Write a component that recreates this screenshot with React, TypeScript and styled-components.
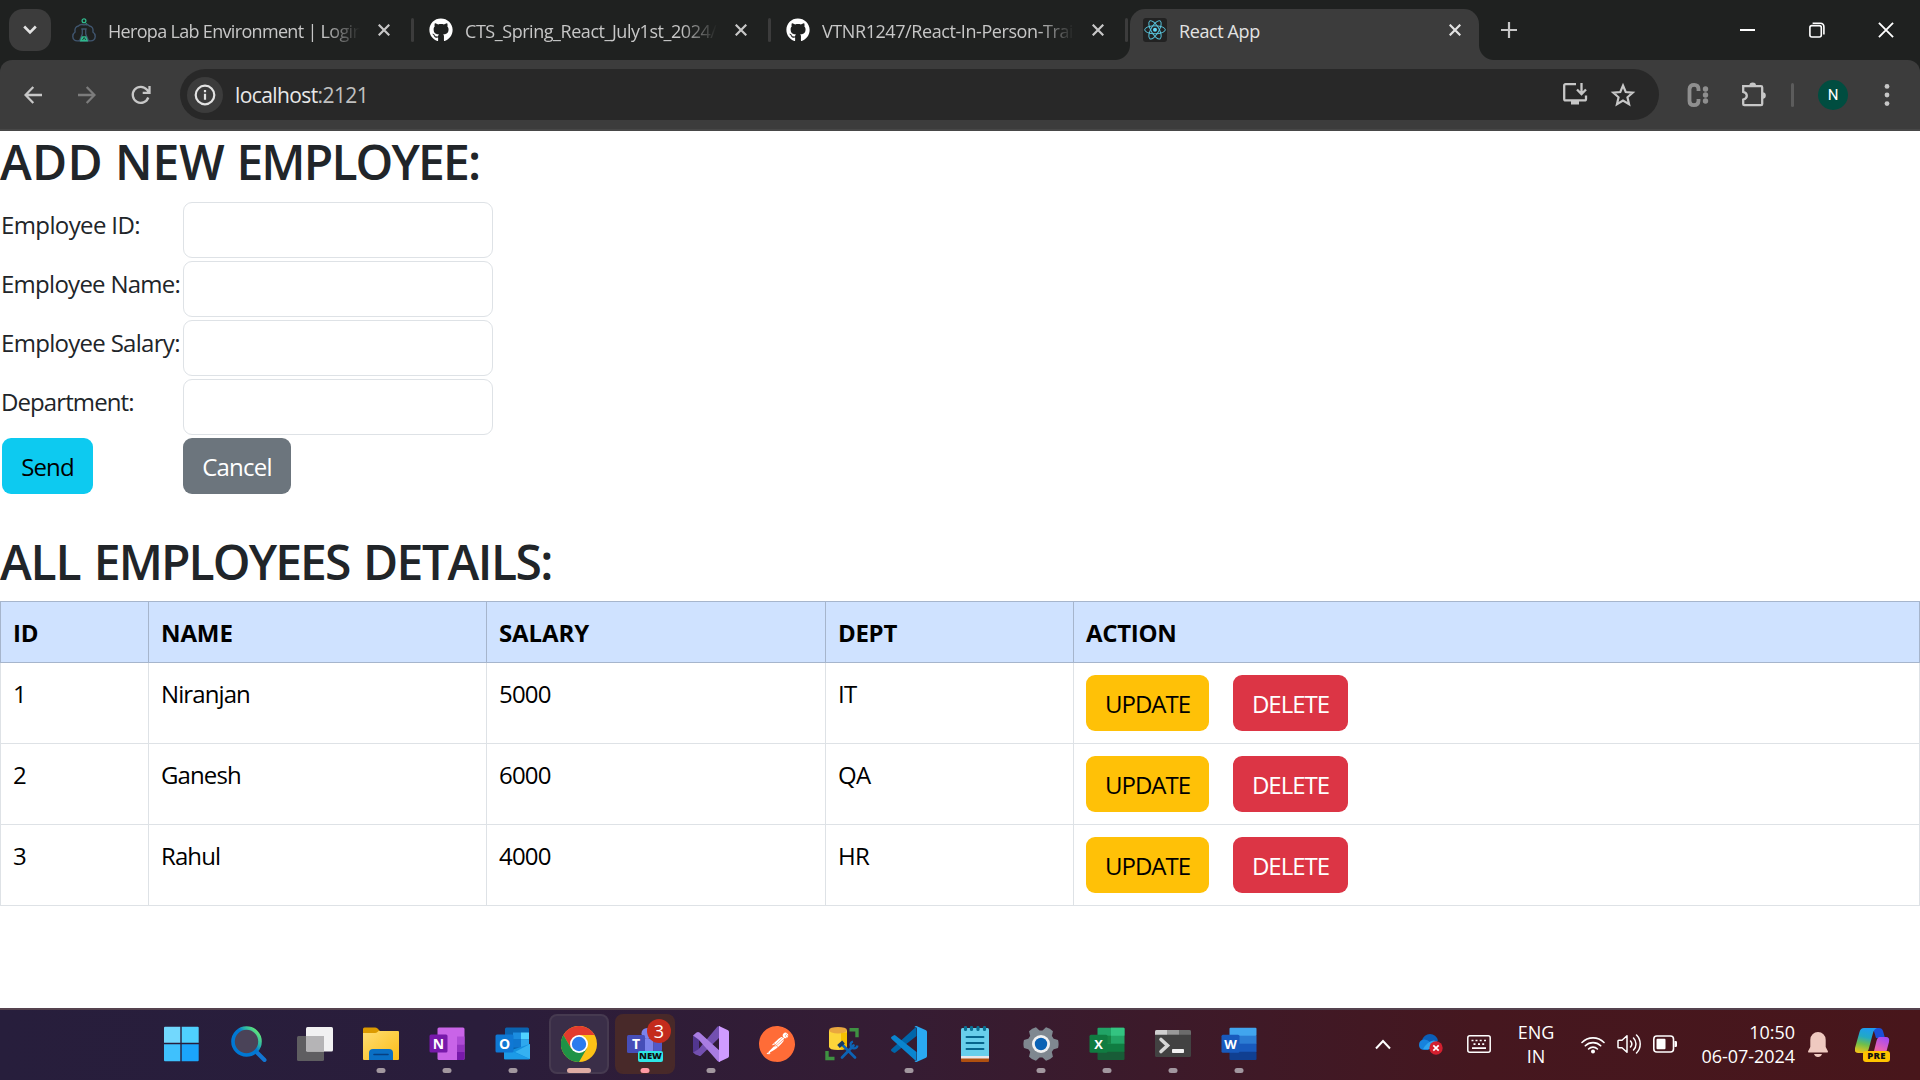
import React from "react";
import styled, { createGlobalStyle } from "styled-components";
import { FaGithub } from "react-icons/fa";
import { SiPostman } from "react-icons/si";

const GlobalStyle = createGlobalStyle`
  *, *::before, *::after { box-sizing: border-box; }
  body {
    margin: 0;
    background: #fff;
    font-family: "Open Sans", "Noto Sans", sans-serif;
    overflow: hidden;
  }
  svg { display: block; flex: none; }
`;

const Screen = styled.div`
  display: flex;
  flex-direction: column;
  width: 1920px;
  height: 1080px;
`;

/* ---------- browser frame ---------- */

const TabStrip = styled.header`
  display: flex;
  height: 60px;
  background: #1f2120;
  color: #c7c7c7;
`;

const TabSearch = styled.button`
  display: grid;
  place-items: center;
  width: 42px;
  height: 42px;
  margin: 9px 8px 0 9px;
  padding: 0;
  border: 0;
  border-radius: 14px;
  background: #3c3c3c;
  color: #e3e3e3;
`;

const Tab = styled.div<{ $active?: boolean }>`
  position: relative;
  display: flex;
  align-items: center;
  width: ${(p) => (p.$active ? 349 : 357)}px;
  height: 51px;
  margin-top: 9px;
  padding: 0 ${(p) => (p.$active ? 18 : 2)}px 9px 13px;
  border-radius: 15px 15px 0 0;
  background: ${(p) => (p.$active ? "#3c3c3c" : "transparent")};
  color: ${(p) => (p.$active ? "#e3e3e3" : "#c7c7c7")};
`;

const Flare = styled.span<{ $side: "left" | "right" }>`
  position: absolute;
  bottom: 0;
  ${(p) => p.$side}: -15px;
  width: 15px;
  height: 15px;
  background: radial-gradient(
    circle at ${(p) => (p.$side === "left" ? "0 0" : "100% 0")},
    transparent 14.5px,
    #3c3c3c 15.5px
  );
`;

const TabTitle = styled.span<{ $track: number; $fade?: boolean }>`
  flex: 1;
  min-width: 0;
  margin: 2px 18px 0 12px;
  overflow: hidden;
  white-space: nowrap;
  font-size: 18px;
  line-height: 26px;
  letter-spacing: ${(p) => p.$track}px;
  ${(p) =>
    p.$fade &&
    "mask-image: linear-gradient(90deg, #000 calc(100% - 36px), transparent);"}
`;

const TabDivider = styled.span`
  width: 3px;
  height: 24px;
  margin-left: 21px;
  border-radius: 2px;
  background: #3c3c3c;
`;

const NewTab = styled.button`
  display: grid;
  place-items: center;
  width: 30px;
  height: 30px;
  margin: 15px 0 0 15px;
  padding: 0;
  border: 0;
  background: none;
  color: #c7c7c7;
`;

const WindowControls = styled.div`
  display: flex;
  margin-left: auto;
  color: #fff;
`;

const WindowControl = styled.span`
  display: grid;
  place-items: center;
  width: 69px;
  height: 60px;
`;

const Toolbar = styled.div`
  background: #1f2120;
`;

const ToolbarInner = styled.div`
  display: flex;
  align-items: center;
  height: 71px;
  padding: 0 18px;
  border-radius: 12px 12px 0 0;
  border-bottom: 2px solid #474747;
  background: #3c3c3c;
  color: #c7c7c7;
`;

const NavButton = styled.span<{ $dim?: boolean }>`
  display: grid;
  place-items: center;
  width: 30px;
  height: 30px;
  margin-right: 24px;
  color: ${(p) => (p.$dim ? "#7c7c7c" : "#c7c7c7")};
`;

const Omnibox = styled.div`
  display: flex;
  align-items: center;
  width: 1479px;
  height: 51px;
  padding: 0 23px 0 7px;
  border-radius: 26px;
  background: #282828;
`;

const SiteInfo = styled.span`
  display: grid;
  place-items: center;
  width: 36px;
  height: 36px;
  margin-right: 12px;
  border-radius: 50%;
  background: #3c3c3c;
  color: #e3e3e3;
`;

const Address = styled.span`
  flex: 1;
  font-size: 21px;
  line-height: 30px;
  letter-spacing: -0.6px;
  color: #c0c0c0;
`;

const Host = styled.span`
  color: #e8e8e8;
`;

const OmniActions = styled.span`
  display: flex;
  gap: 22px;
`;

const Extensions = styled.div`
  display: flex;
  align-items: center;
  margin-left: auto;
`;

const ToolbarRule = styled.span`
  width: 3px;
  height: 24px;
  margin: 0 24px 0 24px;
  border-radius: 2px;
  background: #5c5c5c;
`;

const Avatar = styled.span`
  display: grid;
  place-items: center;
  width: 30px;
  height: 30px;
  margin-right: 36px;
  border-radius: 50%;
  background: #004d40;
  color: #fff;
  font: 15px/30px Roboto, sans-serif;
`;

/* ---------- page ---------- */

const Page = styled.main`
  flex: 1;
  background: #fff;
  color: #212529;
  font-size: 24px;
  line-height: 36px;
`;

const Heading = styled.h2<{ $gap: number }>`
  margin: 0;
  padding: 2px 0 10px;
  font-size: 48px;
  font-weight: 600;
  line-height: 58px;
  word-spacing: ${(p) => p.$gap}px;
`;

const Word = styled.span<{ $track: number }>`
  letter-spacing: ${(p) => p.$track}px;
`;

const EmployeeForm = styled.form`
  display: grid;
  grid-template-columns: 178px 310px;
  gap: 3px;
  margin: 1px 0 37px 2px;
`;

const Label = styled.label<{ $track: number }>`
  height: 56px;
  margin-left: -1px;
  padding-top: 5px;
  white-space: nowrap;
  letter-spacing: ${(p) => p.$track}px;
`;

const Field = styled.input`
  width: 310px;
  height: 56px;
  padding: 9px 18px;
  border: 1px solid #dee2e6;
  border-radius: 9px;
  background: #fff;
  font: inherit;
  outline: 0;
`;

const tones = {
  info: ["#0dcaf0", "#000"],
  secondary: ["#6c757d", "#fff"],
  warning: ["#ffc107", "#000"],
  danger: ["#dc3545", "#fff"],
} as const;

const Button = styled.button<{ $tone: keyof typeof tones; $width: number; $track: number }>`
  justify-self: start;
  width: ${(p) => p.$width}px;
  height: 56px;
  padding: 1px 0 0;
  border: 0;
  border-radius: 9px;
  background: ${(p) => tones[p.$tone][0]};
  color: ${(p) => tones[p.$tone][1]};
  font: inherit;
  letter-spacing: ${(p) => p.$track}px;
`;

const Table = styled.table`
  width: 1920px;
  table-layout: fixed;
  border-collapse: collapse;
  text-align: left;
  color: #000;
`;

const Col = styled.col<{ $width: number }>`
  width: ${(p) => p.$width}px;
`;

const Th = styled.th<{ $track: number }>`
  height: 61px;
  padding: 12px 12px 11px;
  border: 1px solid #a6b5cc;
  background: #cfe2ff;
  font-weight: 700;
  letter-spacing: ${(p) => p.$track}px;
`;

const Td = styled.td<{ $track?: number }>`
  height: 81px;
  padding: 13px 12px 12px;
  border: 1px solid #dee2e6;
  vertical-align: top;
  letter-spacing: ${(p) => p.$track ?? 0}px;
`;

const ActionTd = styled(Td)`
  padding: 12px;
`;

const Actions = styled.div`
  display: flex;
  gap: 24px;
`;

/* ---------- taskbar ---------- */

const Taskbar = styled.footer`
  display: flex;
  height: 72px;
  padding: 0 29px 0 150px;
  border-top: 2px solid #55434f;
  background: linear-gradient(90deg, #271e3c 0, #2a1d3b 480px, #351c33 900px, #3c1a2a 1150px, #45171f 1480px, #48161b 1920px);
  color: #fff;
`;

const Slot = styled.div<{ $state?: "active" | "alert" }>`
  position: relative;
  display: grid;
  place-items: center;
  width: 60px;
  height: 60px;
  margin: 4px 3px 0;
  border-radius: 8px;
  border: 2px solid ${(p) =>
    p.$state === "active" ? "#463a50" : p.$state === "alert" ? "#482929" : "transparent"};
  background: ${(p) =>
    p.$state === "active" ? "#3a2e48" : p.$state === "alert" ? "#482929" : "transparent"};
`;

const Running = styled.span<{ $width?: number; $color?: string }>`
  position: absolute;
  bottom: -1px;
  left: 50%;
  width: ${(p) => p.$width ?? 9}px;
  height: 5px;
  transform: translateX(-50%);
  border-radius: 3px;
  background: ${(p) => p.$color ?? "#a2979f"};
`;

const Badge = styled.span`
  position: absolute;
  top: 3px;
  right: 2px;
  width: 24px;
  height: 24px;
  border-radius: 50%;
  background: #c42b1c;
  font-size: 18px;
  line-height: 24px;
  text-align: center;
`;

const NewTag = styled.span`
  position: absolute;
  left: 21px;
  top: 35px;
  width: 25px;
  height: 11px;
  border-radius: 2px;
  background: #2ee6e6;
  color: #111;
  font-size: 9.5px;
  font-weight: 800;
  line-height: 10px;
  text-align: center;
`;

const Tray = styled.div`
  display: flex;
  align-items: center;
  margin-left: auto;
  padding-bottom: 2px;
`;

const TrayItem = styled.span<{ $width: number }>`
  display: grid;
  place-items: center;
  width: ${(p) => p.$width}px;
`;

const TrayText = styled.span<{ $align: "center" | "right"; $width: number }>`
  width: ${(p) => p.$width}px;
  font-size: 18px;
  line-height: 24px;
  letter-spacing: -0.05px;
  text-align: ${(p) => p.$align};
  white-space: pre-line;
`;

const Copilot = styled.span`
  position: relative;
  width: 36px;
  height: 36px;
  margin-left: 14px;
`;

const PreTag = styled.span`
  position: absolute;
  left: 8px;
  top: 25px;
  width: 27px;
  height: 11px;
  border-radius: 3px;
  background: #ffc400;
  color: #111;
  font-size: 9.5px;
  font-weight: 800;
  line-height: 10px;
  text-align: center;
  letter-spacing: 0.3px;
`;

/* ---------- icons ---------- */

const Close = ({ size = 12, w = 2.2 }: { size?: number; w?: number }) => (
  <svg width={size} height={size} viewBox="0 0 12 12" fill="none" stroke="currentColor" strokeWidth={w}>
    <path d="M.7.7l10.6 10.6M11.3.7L.7 11.3" />
  </svg>
);

const Heropa = () => (
  <svg width="24" height="24" viewBox="0 0 24 24" fill="none">
    <circle cx="12" cy="2.8" r="1.9" stroke="#2fb98c" strokeWidth="1.3" />
    <circle cx="14.4" cy="6.3" r="1" fill="#2fb98c" />
    <path d="M7 22.600C3 23.600.7 21.400.8 18.300c.1-2 .9-3.400 2.300-4.300-.6-3.600.9-5.700 3.300-6 1.200-1.300 3.300-1.900 5.600-1.200 2.300-.7 4.400-.1 5.600 1.200 2.400.3 3.900 2.400 3.300 6 1.400.9 2.200 2.300 2.300 4.300.1 3.100-2.200 5.300-6.200 4.300" stroke="#40566f" strokeWidth="1.400" />
    <path d="M9.300 11h5.400M10.300 11v5L7.500 22.900h9L13.700 16v-5" stroke="#40566f" strokeWidth="1.300" />
    <path d="M9.800 18.200h4.400l2 5.300H7.800z" fill="#2fb98c" />
    <path d="M10.500 22l1.700-2.500 1.500 2.500" stroke="#1f2120" strokeWidth=".8" />
  </svg>
);

const ReactLogo = () => (
  <svg width="24" height="24" viewBox="0 0 24 24" fill="none" stroke="#58c4dc" strokeWidth="1">
    <rect width="24" height="24" rx="3" fill="#222" stroke="none" />
    <g transform="translate(12 11.8)">
      <ellipse rx="10.300" ry="4" />
      <ellipse rx="10.300" ry="4" transform="rotate(60)" />
      <ellipse rx="10.300" ry="4" transform="rotate(120)" />
      <circle r="2" fill="#61dafb" stroke="none" />
    </g>
  </svg>
);

const InstallIcon = () => (
  <svg width="26" height="24" viewBox="0 0 26 24" fill="none" stroke="currentColor" strokeWidth="2.3">
    <path d="M14 2.200H3.600q-1.400 0-1.400 1.400V17q0 1.400 1.400 1.400h19q1.400 0 1.400-1.400v-3.500M19.500 1v10.500M15 7.500l4.500 4.500L24 7.500" />
    <path d="M9 18h8v4.500H9z" fill="currentColor" stroke="none" />
  </svg>
);

const StarIcon = () => (
  <svg width="26" height="26" viewBox="0 0 24 24" fill="none" stroke="currentColor" strokeWidth="2">
    <path d="M12 3.200l2.500 6 6.500.6-4.900 4.300 1.500 6.400L12 17.100l-5.600 3.400 1.500-6.400L3 9.800l6.500-.6z" />
  </svg>
);

const ColonIcon = () => (
  <svg width="23" height="26" viewBox="0 0 23 26" fill="none">
    <path d="M11.500 9V7Q11.500 2.800 7.200 2.800T2.500 7v12q0 4.200 4.400 4.200t4.600-4.200v-2" stroke="#8f8f8f" strokeWidth="3.800" />
    <circle cx="18.500" cy="7" r="2.700" fill="#8f8f8f" />
    <circle cx="18.500" cy="13" r="2.700" fill="#8f8f8f" />
    <circle cx="18.500" cy="19" r="2.700" fill="#8f8f8f" />
  </svg>
);

const PuzzleIcon = () => (
  <svg width="27" height="27" viewBox="0 0 27 27" fill="none" stroke="currentColor" strokeWidth="2.300">
    <path d="M3.200 5.200H21q1.200 0 1.200 1.200V23q0 1.200-1.200 1.200H4.400q-1.200 0-1.200-1.200v-4.500q3.600-1 3.600-3.800t-3.600-3.800z" />
    <path d="M9.300 5a3.400 3.400 0 016.800 0zM22.500 11.300a3.300 3.300 0 010 6.600z" fill="currentColor" stroke="none" />
  </svg>
);

const StartIcon = () => (
  <svg width="36" height="36" viewBox="1.500 0 36 36" overflow="visible">
    <path d="M1.500.8h15.300v16H.5V1.800q0-1 1-1z" fill="#72d8fd" />
    <path d="M18.200.8h16q1 0 1 1v15h-17z" fill="#4fd0fe" />
    <path d="M.5 18.200h16.300v17H1.500q-1 0-1-1z" fill="#3fc1fd" />
    <path d="M18.200 18.200h17v16q0 1-1 1h-16z" fill="#1ba5fb" />
  </svg>
);

const SearchIcon = () => (
  <svg width="36" height="36" viewBox="0 0 36 36" fill="none">
    <defs>
      <linearGradient id="ring" x1="1" y1="0" x2=".2" y2=".7">
        <stop offset="0.150" stopColor="#5fe37c" />
        <stop offset=".4" stopColor="#2bb5a8" />
        <stop offset=".6" stopColor="#0078d4" />
      </linearGradient>
    </defs>
    <path d="M26 26.500l7.500 7.500" stroke="#1276d3" strokeWidth="4" strokeLinecap="round" />
    <circle cx="15.500" cy="15.500" r="13.500" fill="#4a4358" stroke="url(#ring)" strokeWidth="3.600" />
  </svg>
);

const TaskViewIcon = () => (
  <svg width="36" height="36" viewBox="0 0 36 36">
    <rect x="0" y="10" width="27" height="25" rx="1.500" fill="#5f5e61" />
    <rect x="9" y="1" width="27" height="24.500" rx="1.500" fill="#f1f1f2" />
    <path d="M9 10h18v15.500H10.500q-1.500 0-1.500-1.500z" fill="#b5b4b6" />
  </svg>
);

const ExplorerIcon = () => (
  <svg width="36" height="36" viewBox="0 0 36 36">
    <defs>
      <linearGradient id="folder" x1="0" y1="0" x2="1" y2="1">
        <stop offset="0" stopColor="#ffdd72" />
        <stop offset="1" stopColor="#fbbd18" />
      </linearGradient>
    </defs>
    <path d="M0 3q0-1.500 1.500-1.500H12q1.500 0 2.500 1l2 2V10H0z" fill="#dc9a00" />
    <path d="M0 7h12q1.500 0 2.500-1l1-1H35q1 0 1 1v27q0 1-1 1H1q-1 0-1-1z" fill="url(#folder)" />
    <path d="M6 34v-7q0-4 4-4h16q4 0 4 4v7z" fill="#0a6fc4" />
    <path d="M11 28.500h14" stroke="#073f80" strokeWidth="1.600" strokeLinecap="round" />
  </svg>
);

const tile = { fontFamily: "Open Sans, sans-serif", fontWeight: 700, fill: "#fff", textAnchor: "middle" as const };

const OneNoteIcon = () => (
  <svg width="36" height="36" viewBox="0 0 36 36">
    <rect x="8.500" y="1.500" width="27" height="32.500" rx="1.500" fill="#c964e8" />
    <path d="M28 10.500h7.500v8H28z" fill="#ae4bd5" />
    <path d="M28 18.500h7.500v8H28z" fill="#9332bf" />
    <path d="M28 26h7.500v6.500q0 1.500-1.500 1.500h-6z" fill="#7719aa" />
    <rect x=".5" y="8.500" width="18" height="18" rx="1.500" fill="#7719aa" />
    <text x="9.500" y="22.500" fontSize="14" {...tile}>N</text>
  </svg>
);

const OutlookIcon = () => (
  <svg width="36" height="36" viewBox="0 0 36 36">
    <rect x="10" y="1.500" width="24" height="25" rx="1.500" fill="#0a63b0" />
    <path d="M18 6.500h8v7h-8z" fill="#1b8de0" />
    <path d="M26 6.500h8v7h-8z" fill="#50d2ff" />
    <path d="M18 13.500h8v8h-8z" fill="#0f76cf" />
    <path d="M26 13.500h8v7l-8 4z" fill="#2ea8ee" />
    <path d="M9 20l9 3.500L35 18v14q0 1.500-1.500 1.500h-23Q9 33.500 9 32z" fill="#1490df" />
    <path d="M35 18L20 26l15 7z" fill="#35b1f1" />
    <path d="M9 22l26 11H10.500Q9 33.500 9 32z" fill="#1c9be8" />
    <rect x=".5" y="8.500" width="18" height="18" rx="1.500" fill="#0f78d4" />
    <text x="9.500" y="22.500" fontSize="14" {...tile}>O</text>
  </svg>
);

const ChromeIcon = () => (
  <svg width="36" height="36" viewBox="0 0 36 36">
    <circle cx="18" cy="18" r="18" fill="#fbc116" />
    <path d="M18 9h15.600A18 18 0 002.400 9l7.800 13.500z" fill="#e33b2e" />
    <path d="M2.400 9A18 18 0 0018 36l7.800-13.500H10.200z" fill="#1f9246" />
    <circle cx="18" cy="18" r="9" fill="#fff" />
    <circle cx="18" cy="18" r="7.200" fill="#2a7bee" />
  </svg>
);

const TeamsIcon = () => (
  <svg width="36" height="36" viewBox="0 0 36 36">
    <circle cx="20" cy="7.500" r="5.500" fill="#7b83eb" />
    <path d="M11 13h15.500v13a8 8 0 01-15.500 2z" fill="#7b83eb" />
    <path d="M26.500 14H35v10a6 6 0 01-8.500 4z" fill="#5059c9" />
    <rect x="0" y="9" width="18" height="18" rx="1.500" fill="#464eb8" />
    <text x="9" y="23" fontSize="14" {...tile}>T</text>
  </svg>
);

const VisualStudioIcon = () => (
  <svg width="36" height="36" viewBox="0 0 36 36">
    <path d="M0 9.500l6-1v19l-6-1z" fill="#52368f" />
    <path d="M5.500 29.500L2.500 28.500 0 26.500l5.500-3.300L24.500.5 27 0v11L8 29.500q-1.200 1-2.500 0z" fill="#7350b0" />
    <path d="M0 9.500L3.500 6.500q1.500-1 3 0L27 25v11q-1.500 0-2.500-1L5.500 13.500z" fill="#a97de2" />
    <path d="M26 0l9 4.300q1 .5 1 1.700v24q0 1.200-1 1.700L26 36z" fill="#cf9bff" />
  </svg>
);

const PostmanMark = styled.span`
  display: grid;
  place-items: center;
  width: 36px;
  height: 36px;
  border-radius: 50%;
  background: radial-gradient(circle, #fff 16px, transparent 16.5px);
  color: #ff6c37;
`;

const SqlIcon = () => (
  <svg width="36" height="36" viewBox="0 0 36 36" fill="none">
    <path d="M24.500 3.700h7.500v7.500M2 25v7.500h7.500" stroke="#3f9142" strokeWidth="3.400" />
    <path d="M4 4v16.500q0 3.500 9 3.500t9-3.500V4z" fill="#fcd53a" />
    <path d="M16 6.500h6v14q-1 2.500-6 3.400z" fill="#f5bf00" />
    <ellipse cx="13" cy="4.200" rx="9" ry="3.300" fill="#e9a73f" />
    <path d="M17 18.500l13 13M28.500 19.500L17 31.500" stroke="#0d63b5" strokeWidth="2.700" strokeLinecap="round" />
    <path d="M13.500 20.500l5-4.500" stroke="#173a63" strokeWidth="4" />
    <path d="M28 15.500a3.500 3.500 0 104.500 4" stroke="#0d63b5" strokeWidth="2.200" />
  </svg>
);

const CodeIcon = () => (
  <svg width="36" height="36" viewBox="0 0 36 36">
    <path d="M.6 25.300a1.500 1.500 0 010-2.200L25.500.5V10L4.500 26.500q-1 .8-2 0z" fill="#0065a9" />
    <path d="M.6 10.700a1.500 1.500 0 000 2.200L25.500 35.500V26L4.500 9.500q-1-.8-2 0z" fill="#0a85cf" />
    <path d="M25.500 0L35 4.300q1 .5 1 1.600v24.200q0 1.100-1 1.600L25.500 36q-1.500 0-2.200-1.200 2.700 1 2.700-1.200V2.400q0-2.200-2.700-1.200Q24 0 25.500 0z" fill="#2aa9f2" />
  </svg>
);

const NotepadIcon = () => (
  <svg width="36" height="36" viewBox="0 0 36 36">
    <path d="M4 32h28v3q0 1-1 1H5q-1 0-1-1z" fill="#b0500f" />
    <path d="M4 28h28v4.500H4z" fill="#e9e6e8" />
    <path d="M4 3.500Q4 2 5.500 2h25Q32 2 32 3.500V30H4z" fill="#68cfeb" />
    <path d="M9.500 11h17M9.500 17h17M9.500 23h17" stroke="#06658c" strokeWidth="1.900" strokeLinecap="round" />
    <path d="M8.500 1.500v2M14.500 1.500v2M21 1.500v2M27.500 1.500v2" stroke="#0a6f91" strokeWidth="3.200" strokeLinecap="round" />
  </svg>
);

const SettingsIcon = () => (
  <svg width="36" height="36" viewBox="0 0 36 36">
    <g fill="#7f8890" transform="translate(18 18)">
      <circle r="13.500" />
      {[0, 60, 120, 180, 240, 300].map((a) => (
        <path key={a} transform={`rotate(${a + 30})`} d="M-5.500-12l1.500-5q4-1.200 8 0l1.500 5z" />
      ))}
    </g>
    <circle cx="18" cy="18" r="9" fill="#f1f1f1" />
    <circle cx="18" cy="18" r="6.200" fill="#0b62b4" />
  </svg>
);

type OfficeProps = { letter: string; bands: string[]; tab: string; right: string };
const OfficeIcon = ({ letter, bands, tab, right }: OfficeProps) => (
  <svg width="36" height="36" viewBox="0 0 36 36">
    {bands.map((c, i) => (
      <rect key={c} x="8.500" y={1.700 + i * 8} width="27" height="8.300" rx={i === 0 || i === 3 ? 1 : 0} fill={c} />
    ))}
    {right && <path d="M22 1.700h12.500q1 0 1 1V9.700H22z" fill={right} />}
    {letter === "X" && <path d="M8.500 9.700H22v8H8.500z" fill="#178545" />}
    <rect x=".5" y="8.700" width="18" height="18" rx="1.500" fill={tab} />
    <text x="9.500" y="22.500" fontSize="13" {...tile}>{letter}</text>
  </svg>
);

const TerminalIcon = () => (
  <svg width="36" height="36" viewBox="0 0 36 36">
    <rect x="0" y="4" width="36" height="27" rx="1.500" fill="#424242" />
    <path d="M0 8.700V5.500Q0 4 1.500 4H12v4.700z" fill="#cfcfcf" />
    <path d="M12 4h12v4.700H12z" fill="#999" />
    <path d="M24 4h10.500Q36 4 36 5.500v3.200H24z" fill="#6b6b6b" />
    <path d="M6 13.500l6.500 6L6 25.500" fill="none" stroke="#d6d6d6" strokeWidth="3.600" strokeLinecap="round" />
    <rect x="17" y="23" width="12" height="4" rx=".8" fill="#f2f2f2" />
  </svg>
);

const CloudIcon = () => (
  <svg width="26" height="22" viewBox="0 0 26 22">
    <path d="M4 7.500Q6 1 12 1t8 6.500L10 15z" fill="#0b5fb8" />
    <path d="M1 12q0-5 5-5.500 3-.3 6 2.500l4 4-6 4H6q-5-.5-5-5z" fill="#1682dd" />
    <path d="M10 10q6-5 11 0v6H5l2-3z" fill="#2ea3ee" />
    <circle cx="18" cy="15" r="6.700" fill="#d3202f" />
    <path d="M15.300 12.300l5.400 5.400M20.700 12.300l-5.400 5.400" stroke="#fff" strokeWidth="1.700" />
  </svg>
);

const KeyboardIcon = () => (
  <svg width="24" height="18" viewBox="0 0 24 18" fill="none" stroke="#fff" strokeWidth="1.500">
    <rect x=".8" y=".8" width="22.400" height="16.400" rx="2" />
    <path d="M4.500 5.500h2M8.500 5.500h2M12.700 5.500h2M17 5.500h2M6.500 9.200h2M11 9.200h2M15.200 9.200h2M5 13.200h14" strokeWidth="1.700" />
  </svg>
);

const WifiIcon = () => (
  <svg width="24" height="19" viewBox="0 0 24 19" fill="none" stroke="#fff" strokeWidth="1.600" strokeLinecap="round">
    <path d="M1 7.500a15.500 15.500 0 0122 0M4.300 10.800a10.900 10.900 0 0115.400 0M7.600 14a6.200 6.200 0 018.800 0" />
    <circle cx="12" cy="16.500" r="1.200" fill="#fff" />
  </svg>
);

const VolumeIcon = () => (
  <svg width="24" height="22" viewBox="0 0 24 22" fill="none" stroke="#fff" strokeWidth="1.500" strokeLinecap="round" strokeLinejoin="round">
    <path d="M1 8v6q0 .8.800.8H5l5 4.500V2.700L5 7.200H1.800Q1 7.200 1 8z" />
    <path d="M13.500 8a4.500 4.500 0 010 6M16.500 5a8.500 8.500 0 010 12M19.500 2a12.800 12.800 0 010 18" />
  </svg>
);

const BatteryIcon = () => (
  <svg width="25" height="18" viewBox="0 0 25 18" fill="none">
    <rect x=".8" y="1" width="19.700" height="16" rx="3" stroke="#fff" strokeWidth="1.600" />
    <rect x="3.500" y="3.800" width="9" height="10.400" rx="1" fill="#fff" />
    <path d="M21.500 6h1.300q1.200 0 1.200 1.200v3.600q0 1.200-1.200 1.200h-1.300z" fill="#fff" />
  </svg>
);

const BellIcon = () => (
  <svg width="20" height="25" viewBox="0 0 20 25" fill="#efc9c0">
    <path d="M10 0a7.700 7.700 0 017.700 7.700V15l2.100 4q.5 1.500-1 1.500H1.200q-1.500 0-1-1.500l2.100-4V7.700A7.700 7.700 0 0110 0zM6 22h8q-1 3-4 3t-4-3z" />
  </svg>
);

const CopilotIcon = () => (
  <svg width="36" height="36" viewBox="0 -2 36 36">
    <defs>
      <linearGradient id="cpA" x1=".5" y1="0" x2=".3" y2="1">
        <stop offset="0" stopColor="#1d9bf0" />
        <stop offset=".35" stopColor="#22a9c4" />
        <stop offset=".65" stopColor="#6fbf4b" />
        <stop offset="1" stopColor="#f0c419" />
      </linearGradient>
      <linearGradient id="cpB" x1=".7" y1="0" x2=".3" y2="1">
        <stop offset="0" stopColor="#a64bf4" />
        <stop offset=".5" stopColor="#e560b5" />
        <stop offset="1" stopColor="#ff7a59" />
      </linearGradient>
    </defs>
    <path d="M18 0h6q3 0 4 3l2 7h-9z" fill="#1b4fd8" />
    <path d="M9 0h13q-3 1-4 5l-4 15q-1 5-5 5H3q-4 0-3-5L4.500 4Q5.500 0 9 0z" fill="url(#cpA)" />
    <path d="M25 9h6q4 0 3 5l-3.500 13q-1 5-5 5H14q3-1 4-5l3.500-14q1-4 3.500-4z" fill="url(#cpB)" />
  </svg>
);

/* ---------- data ---------- */

const tabs = [
  { title: "Heropa Lab Environment | Login", track: -0.68, icon: <Heropa /> },
  { title: "CTS_Spring_React_July1st_2024/", track: -0.45, icon: <FaGithub size={24} color="#fff" /> },
  { title: "VTNR1247/React-In-Person-Train", track: -0.42, icon: <FaGithub size={24} color="#fff" /> },
];

const fields = [
  { label: "Employee ID:", track: -0.62 },
  { label: "Employee Name:", track: -0.73 },
  { label: "Employee Salary:", track: -0.7 },
  { label: "Department:", track: -0.9 },
];

const columns = [
  { label: "ID", width: 148, track: -0.2 },
  { label: "NAME", width: 338, track: -0.1 },
  { label: "SALARY", width: 339, track: -0.1 },
  { label: "DEPT", width: 248, track: -0.3 },
  { label: "ACTION", width: 846, track: -0.3 },
];

const employees = [
  { id: 1, name: "Niranjan", salary: 5000, dept: "IT" },
  { id: 2, name: "Ganesh", salary: 6000, dept: "QA" },
  { id: 3, name: "Rahul", salary: 4000, dept: "HR" },
];

const apps: { name: string; icon: React.ReactNode; running?: boolean }[] = [
  { name: "start", icon: <StartIcon /> },
  { name: "search", icon: <SearchIcon /> },
  { name: "taskview", icon: <TaskViewIcon /> },
  { name: "explorer", icon: <ExplorerIcon />, running: true },
  { name: "onenote", icon: <OneNoteIcon />, running: true },
  { name: "outlook", icon: <OutlookIcon />, running: true },
  { name: "chrome", icon: <ChromeIcon /> },
  { name: "teams", icon: <TeamsIcon /> },
  { name: "visualstudio", icon: <VisualStudioIcon />, running: true },
  { name: "postman", icon: <PostmanMark><SiPostman size={36} /></PostmanMark> },
  { name: "sql", icon: <SqlIcon /> },
  { name: "code", icon: <CodeIcon />, running: true },
  { name: "notepad", icon: <NotepadIcon /> },
  { name: "settings", icon: <SettingsIcon />, running: true },
  { name: "excel", icon: <OfficeIcon letter="X" bands={["#21a366", "#22a565", "#107c41", "#185c37"]} right="#33c481" tab="#107c41" />, running: true },
  { name: "terminal", icon: <TerminalIcon />, running: true },
  { name: "word", icon: <OfficeIcon letter="W" bands={["#41a5ee", "#2b7cd3", "#185abd", "#103f91"]} right="" tab="#185abd" />, running: true },
];

export default function App() {
  return (
    <Screen>
      <GlobalStyle />
      <TabStrip>
        <TabSearch>
          <svg width="14" height="10" viewBox="0 0 14 10" fill="none" stroke="currentColor" strokeWidth="2.600">
            <path d="M1.200 1.500L7 7.500l5.800-6" />
          </svg>
        </TabSearch>
        {tabs.map((tab) => (
          <Tab key={tab.title}>
            {tab.icon}
            <TabTitle $track={tab.track} $fade>{tab.title}</TabTitle>
            <Close />
            <TabDivider />
          </Tab>
        ))}
        <Tab $active>
          <Flare $side="left" />
          <ReactLogo />
          <TabTitle $track={-0.4}>React App</TabTitle>
          <Close />
          <Flare $side="right" />
        </Tab>
        <NewTab>
          <svg width="16" height="16" viewBox="0 0 16 16" stroke="currentColor" strokeWidth="2.200">
            <path d="M8 0v16M0 8h16" />
          </svg>
        </NewTab>
        <WindowControls>
          <WindowControl>
            <svg width="15" height="3" viewBox="0 0 15 3"><path d="M0 1h15" stroke="#fff" strokeWidth="2" /></svg>
          </WindowControl>
          <WindowControl>
            <svg width="16" height="16" viewBox="0 0 16 16" fill="none" stroke="#fff" strokeWidth="1.600">
              <rect x=".9" y="3.600" width="11.400" height="11.400" rx="2" />
              <path d="M3.600 1.200h7.600q3.700 0 3.700 3.700v7.500" />
            </svg>
          </WindowControl>
          <WindowControl><Close size={16} w={1.4} /></WindowControl>
        </WindowControls>
      </TabStrip>

      <Toolbar>
        <ToolbarInner>
          <NavButton>
            <svg width="18" height="18" viewBox="0 0 18 18" fill="none" stroke="currentColor" strokeWidth="2.300">
              <path d="M18 9H1.500M9.300 1L1.500 9l7.800 8" />
            </svg>
          </NavButton>
          <NavButton $dim>
            <svg width="18" height="18" viewBox="0 0 18 18" fill="none" stroke="currentColor" strokeWidth="2.300">
              <path d="M0 9h16.500M8.700 1l7.800 8-7.800 8" />
            </svg>
          </NavButton>
          <NavButton>
            <svg width="20" height="20" viewBox="0 0 20 20" fill="none" stroke="currentColor" strokeWidth="2.300">
              <path d="M17.300 12.500A8 8 0 1116 4.800l2 2.500M18.500 1v6.800h-6.800" />
            </svg>
          </NavButton>
          <Omnibox>
            <SiteInfo>
              <svg width="22" height="22" viewBox="0 0 22 22" fill="none" stroke="currentColor" strokeWidth="2.200">
                <circle cx="11" cy="11" r="9.300" />
                <path d="M11 9.800v6M11 6v2.300" />
              </svg>
            </SiteInfo>
            <Address><Host>localhost</Host>:2121</Address>
            <OmniActions><InstallIcon /><StarIcon /></OmniActions>
          </Omnibox>
          <Extensions>
            <ColonIcon />
            <TrayItem $width={30} />
            <PuzzleIcon />
            <ToolbarRule />
            <Avatar>N</Avatar>
            <svg width="6" height="28" viewBox="0 0 6 28" fill="currentColor">
              <circle cx="3" cy="5.400" r="2.400" /><circle cx="3" cy="14" r="2.400" /><circle cx="3" cy="22.600" r="2.400" />
            </svg>
            <TrayItem $width={12} />
          </Extensions>
        </ToolbarInner>
      </Toolbar>

      <Page>
        <Heading $gap={-0.5}>
          <Word $track={0.3}>ADD</Word> <Word $track={-0.1}>NEW</Word> <Word $track={-1.85}>EMPLOYEE:</Word>
        </Heading>
        <EmployeeForm>
          {fields.map((f) => (
            <React.Fragment key={f.label}>
              <Label $track={f.track}>{f.label}</Label>
              <Field aria-label={f.label} />
            </React.Fragment>
          ))}
          <Button type="button" $tone="info" $width={91} $track={-0.85}>Send</Button>
          <Button type="button" $tone="secondary" $width={108} $track={-0.75}>Cancel</Button>
        </EmployeeForm>

        <Heading $gap={1}>
          <Word $track={-1.2}>ALL</Word> <Word $track={-1.9}>EMPLOYEES</Word> <Word $track={-1.5}>DETAILS:</Word>
        </Heading>
        <Table>
          <colgroup>{columns.map((c) => <Col key={c.label} $width={c.width} />)}</colgroup>
          <thead>
            <tr>{columns.map((c) => <Th key={c.label} $track={c.track}>{c.label}</Th>)}</tr>
          </thead>
          <tbody>
            {employees.map((e) => (
              <tr key={e.id}>
                <Td>{e.id}</Td>
                <Td $track={-0.9}>{e.name}</Td>
                <Td $track={-0.8}>{e.salary}</Td>
                <Td $track={-0.6}>{e.dept}</Td>
                <ActionTd>
                  <Actions>
                    <Button $tone="warning" $width={123} $track={-1}>UPDATE</Button>
                    <Button $tone="danger" $width={115} $track={-1}>DELETE</Button>
                  </Actions>
                </ActionTd>
              </tr>
            ))}
          </tbody>
        </Table>
      </Page>

      <Taskbar>
        {apps.map((app) => (
          <Slot
            key={app.name}
            $state={app.name === "chrome" ? "active" : app.name === "teams" ? "alert" : undefined}
          >
            {app.icon}
            {app.running && <Running />}
            {app.name === "chrome" && <Running $width={24} $color="#dfaca4" />}
            {app.name === "teams" && (
              <>
                <Badge>3</Badge>
                <NewTag>NEW</NewTag>
                <Running $color="#ff99a4" />
              </>
            )}
          </Slot>
        ))}
        <Tray>
          <TrayItem $width={32}>
            <svg width="16" height="11" viewBox="0 0 16 11" fill="none" stroke="#fff" strokeWidth="2">
              <path d="M1 9.500l7-7.500 7 7.500" />
            </svg>
          </TrayItem>
          <TrayItem $width={64}><CloudIcon /></TrayItem>
          <TrayItem $width={32}><KeyboardIcon /></TrayItem>
          <TrayText $align="center" $width={82}>{"ENG\nIN"}</TrayText>
          <TrayItem $width={32}><WifiIcon /></TrayItem>
          <TrayItem $width={40}><VolumeIcon /></TrayItem>
          <TrayItem $width={32}><BatteryIcon /></TrayItem>
          <TrayText $align="right" $width={114}>{"10:50\n06-07-2024"}</TrayText>
          <TrayItem $width={46}><BellIcon /></TrayItem>
          <Copilot><CopilotIcon /><PreTag>PRE</PreTag></Copilot>
        </Tray>
      </Taskbar>
    </Screen>
  );
}
